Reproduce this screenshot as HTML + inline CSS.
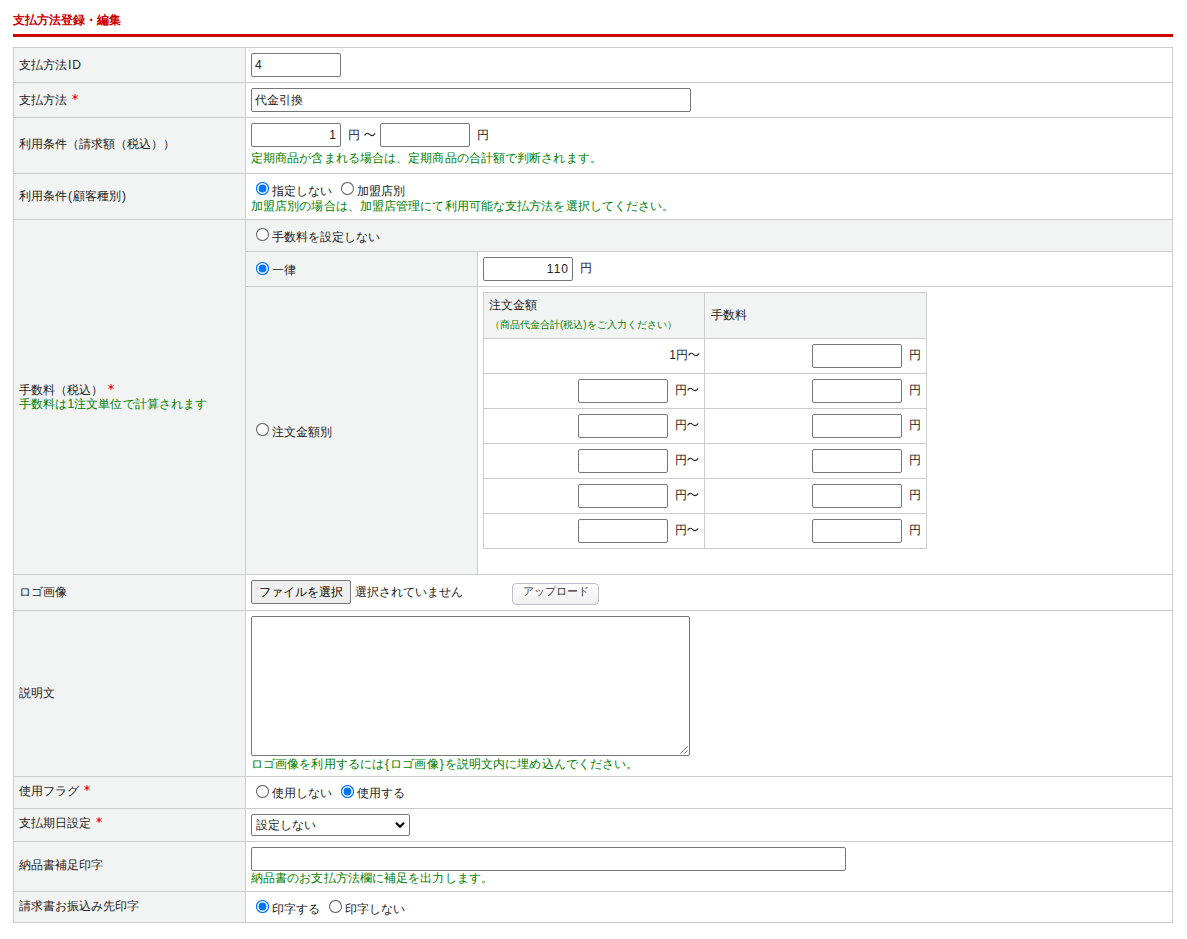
<!DOCTYPE html><html lang="ja"><head><meta charset="utf-8"><style>
html,body{margin:0;padding:0;background:#fff;width:1187px;height:939px;overflow:hidden}
body{font-family:"Liberation Sans",sans-serif;font-size:12px;line-height:16px;color:#222;position:relative}
.a{position:absolute}
.t,.tg,.tt{position:absolute;white-space:nowrap;line-height:16px}
.tg{color:#008000;letter-spacing:0.1px}
.tg.small{letter-spacing:0}
.tt{color:#cc0000;font-weight:bold}
.small{font-size:10px}
.ast{vertical-align:top;margin-top:2px;margin-left:5px}
.til{vertical-align:top}
.inp{position:absolute;border:1px solid #767676;border-radius:2px;background:#fff}
.ru{position:absolute;width:11px;height:11px;border:1px solid #767676;border-radius:50%;background:#fff}
.rc{position:absolute;width:13px;height:13px;border-radius:50%;background:#0075ff}
.rc:after{content:"";position:absolute;left:1.5px;top:1.5px;width:6px;height:6px;border:2px solid #fff;border-radius:50%;background:#0075ff}
.btn{position:absolute;border:1px solid #767676;border-radius:2px;background:#efefef;font-size:12px;color:#000;line-height:22px;text-align:center;white-space:nowrap}
.btn2{position:absolute;border:1px solid #bfbfcc;border-radius:4px;background:linear-gradient(#fefefe,#efefef);font-size:11px;line-height:15px;text-align:center;white-space:nowrap;color:#333}
</style></head><body><div class="a" style="left:13px;top:47px;width:232px;height:875px;background:#f2f3f3"></div>
<div class="a" style="left:245px;top:219px;width:928px;height:32px;background:#f2f3f3"></div>
<div class="a" style="left:245px;top:251px;width:232px;height:323px;background:#f2f3f3"></div>
<div class="a" style="left:483px;top:292px;width:444px;height:46px;background:#f2f3f3"></div>
<div class="a" style="left:13px;top:47px;width:1160px;height:1px;background:#cccccc"></div>
<div class="a" style="left:13px;top:82px;width:1160px;height:1px;background:#cccccc"></div>
<div class="a" style="left:13px;top:117px;width:1160px;height:1px;background:#cccccc"></div>
<div class="a" style="left:13px;top:173px;width:1160px;height:1px;background:#cccccc"></div>
<div class="a" style="left:13px;top:219px;width:1160px;height:1px;background:#cccccc"></div>
<div class="a" style="left:13px;top:574px;width:1160px;height:1px;background:#cccccc"></div>
<div class="a" style="left:13px;top:610px;width:1160px;height:1px;background:#cccccc"></div>
<div class="a" style="left:13px;top:776px;width:1160px;height:1px;background:#cccccc"></div>
<div class="a" style="left:13px;top:808px;width:1160px;height:1px;background:#cccccc"></div>
<div class="a" style="left:13px;top:841px;width:1160px;height:1px;background:#cccccc"></div>
<div class="a" style="left:13px;top:891px;width:1160px;height:1px;background:#cccccc"></div>
<div class="a" style="left:13px;top:922px;width:1160px;height:1px;background:#cccccc"></div>
<div class="a" style="left:13px;top:47px;width:1px;height:876px;background:#cccccc"></div>
<div class="a" style="left:245px;top:47px;width:1px;height:876px;background:#cccccc"></div>
<div class="a" style="left:1172px;top:47px;width:1px;height:876px;background:#cccccc"></div>
<div class="a" style="left:245px;top:251px;width:928px;height:1px;background:#cccccc"></div>
<div class="a" style="left:245px;top:286px;width:928px;height:1px;background:#cccccc"></div>
<div class="a" style="left:477px;top:251px;width:1px;height:323px;background:#cccccc"></div>
<div class="a" style="left:483px;top:292px;width:444px;height:1px;background:#cccccc"></div>
<div class="a" style="left:483px;top:338px;width:444px;height:1px;background:#cccccc"></div>
<div class="a" style="left:483px;top:373px;width:444px;height:1px;background:#cccccc"></div>
<div class="a" style="left:483px;top:408px;width:444px;height:1px;background:#cccccc"></div>
<div class="a" style="left:483px;top:443px;width:444px;height:1px;background:#cccccc"></div>
<div class="a" style="left:483px;top:478px;width:444px;height:1px;background:#cccccc"></div>
<div class="a" style="left:483px;top:513px;width:444px;height:1px;background:#cccccc"></div>
<div class="a" style="left:483px;top:548px;width:444px;height:1px;background:#cccccc"></div>
<div class="a" style="left:483px;top:292px;width:1px;height:257px;background:#cccccc"></div>
<div class="a" style="left:704px;top:292px;width:1px;height:257px;background:#cccccc"></div>
<div class="a" style="left:926px;top:292px;width:1px;height:257px;background:#cccccc"></div>
<div class="tt" style="left:13px;top:12px;">支払方法登録・編集</div>
<div class="a" style="left:13px;top:34px;width:1160px;height:3px;background:#cc0000"></div>
<div class="t" style="left:19px;top:57px;">支払方法<span style="letter-spacing:1px;margin-left:1px">ID</span></div>
<div class="t" style="left:19px;top:92px;">支払方法<svg class="ast" width="6" height="6" viewBox="0 0 6 6"><g stroke="#ff0000" stroke-width="0.9"><line x1="3" y1="0" x2="3" y2="6"/><line x1="0.4" y1="1.5" x2="5.6" y2="4.5"/><line x1="0.4" y1="4.5" x2="5.6" y2="1.5"/></g><circle cx="3" cy="3" r="1.2" fill="#ff0000"/></svg></div>
<div class="t" style="left:19px;top:136px;">利用条件（請求額（税込））</div>
<div class="t" style="left:19px;top:188px;">利用条件<span style="margin:0 1px">(</span>顧客種別<span style="margin-left:1px">)</span></div>
<div class="t" style="left:19px;top:382px;">手数料（税込）<svg class="ast" width="6" height="6" viewBox="0 0 6 6"><g stroke="#ff0000" stroke-width="0.9"><line x1="3" y1="0" x2="3" y2="6"/><line x1="0.4" y1="1.5" x2="5.6" y2="4.5"/><line x1="0.4" y1="4.5" x2="5.6" y2="1.5"/></g><circle cx="3" cy="3" r="1.2" fill="#ff0000"/></svg></div>
<div class="tg" style="left:19px;top:396px;">手数料は1注文単位で計算されます</div>
<div class="t" style="left:19px;top:584px;">ロゴ画像</div>
<div class="t" style="left:19px;top:685px;">説明文</div>
<div class="t" style="left:19px;top:783px;">使用フラグ<svg class="ast" width="6" height="6" viewBox="0 0 6 6"><g stroke="#ff0000" stroke-width="0.9"><line x1="3" y1="0" x2="3" y2="6"/><line x1="0.4" y1="1.5" x2="5.6" y2="4.5"/><line x1="0.4" y1="4.5" x2="5.6" y2="1.5"/></g><circle cx="3" cy="3" r="1.2" fill="#ff0000"/></svg></div>
<div class="t" style="left:19px;top:815px;">支払期日設定<svg class="ast" width="6" height="6" viewBox="0 0 6 6"><g stroke="#ff0000" stroke-width="0.9"><line x1="3" y1="0" x2="3" y2="6"/><line x1="0.4" y1="1.5" x2="5.6" y2="4.5"/><line x1="0.4" y1="4.5" x2="5.6" y2="1.5"/></g><circle cx="3" cy="3" r="1.2" fill="#ff0000"/></svg></div>
<div class="t" style="left:19px;top:857px;">納品書補足印字</div>
<div class="t" style="left:19px;top:898px;">請求書お振込み先印字</div>
<div class="inp" style="left:251px;top:53px;width:88px;height:22px;"></div>
<div class="t" style="left:255px;top:57px;">4</div>
<div class="inp" style="left:251px;top:88px;width:438px;height:22px;"></div>
<div class="t" style="left:255px;top:92px;">代金引換</div>
<div class="inp" style="left:251px;top:123px;width:88px;height:22px;"></div>
<div class="t" style="left:251px;top:127px;width:85px;text-align:right">1</div>
<div class="t" style="left:348px;top:127px;">円 <svg class="til" style="margin-left:1px" width="12" height="16" viewBox="0 0 12 16"><path d="M0.6,8.6 C2,6 3.6,5.6 5.5,7.4 C7.4,9.2 9.2,9.2 11.2,6.4" fill="none" stroke="#222" stroke-width="1.1"/></svg></div>
<div class="inp" style="left:380px;top:123px;width:88px;height:22px;"></div>
<div class="t" style="left:477px;top:127px;">円</div>
<div class="tg" style="left:251px;top:150px;">定期商品が含まれる場合は、定期商品の合計額で判断されます。</div>
<svg class="a" style="left:256px;top:182px" width="13" height="13"><circle cx="6.5" cy="6.5" r="6" fill="#fff" stroke="#0075ff" stroke-width="1.2"/><circle cx="6.5" cy="6.5" r="3.9" fill="#0075ff"/></svg>
<div class="t" style="left:272px;top:183px;">指定しない</div>
<svg class="a" style="left:341px;top:182px" width="13" height="13"><circle cx="6.5" cy="6.5" r="6" fill="#fff" stroke="#6e6e6e" stroke-width="1.1"/></svg>
<div class="t" style="left:357px;top:183px;">加盟店別</div>
<div class="tg" style="left:251px;top:198px;">加盟店別の場合は、加盟店管理にて利用可能な支払方法を選択してください。</div>
<svg class="a" style="left:256px;top:228px" width="13" height="13"><circle cx="6.5" cy="6.5" r="6" fill="#fff" stroke="#6e6e6e" stroke-width="1.1"/></svg>
<div class="t" style="left:272px;top:229px;">手数料を設定しない</div>
<svg class="a" style="left:256px;top:262px" width="13" height="13"><circle cx="6.5" cy="6.5" r="6" fill="#fff" stroke="#0075ff" stroke-width="1.2"/><circle cx="6.5" cy="6.5" r="3.9" fill="#0075ff"/></svg>
<div class="t" style="left:272px;top:262px;">一律</div>
<div class="inp" style="left:483px;top:257px;width:88px;height:22px;"></div>
<div class="t" style="left:483px;top:261px;width:86px;text-align:right;letter-spacing:1px">110</div>
<div class="t" style="left:580px;top:260px;">円</div>
<svg class="a" style="left:256px;top:423px" width="13" height="13"><circle cx="6.5" cy="6.5" r="6" fill="#fff" stroke="#6e6e6e" stroke-width="1.1"/></svg>
<div class="t" style="left:272px;top:424px;">注文金額別</div>
<div class="t" style="left:489px;top:297px;">注文金額</div>
<div class="tg small" style="left:490px;top:317px;">（商品代金合計(税込)をご入力ください）</div>
<div class="t" style="left:711px;top:307px;">手数料</div>
<div class="t" style="left:483px;top:347px;width:217px;text-align:right">1円<svg class="til" width="12" height="16" viewBox="0 0 12 16"><path d="M0.6,8.6 C2,6 3.6,5.6 5.5,7.4 C7.4,9.2 9.2,9.2 11.2,6.4" fill="none" stroke="#222" stroke-width="1.1"/></svg></div>
<div class="inp" style="left:812px;top:344px;width:88px;height:22px;"></div>
<div class="t" style="left:909px;top:347px;">円</div>
<div class="inp" style="left:578px;top:379px;width:88px;height:22px;"></div>
<div class="t" style="left:675px;top:382px;">円<svg class="til" width="12" height="16" viewBox="0 0 12 16"><path d="M0.6,8.6 C2,6 3.6,5.6 5.5,7.4 C7.4,9.2 9.2,9.2 11.2,6.4" fill="none" stroke="#222" stroke-width="1.1"/></svg></div>
<div class="inp" style="left:812px;top:379px;width:88px;height:22px;"></div>
<div class="t" style="left:909px;top:382px;">円</div>
<div class="inp" style="left:578px;top:414px;width:88px;height:22px;"></div>
<div class="t" style="left:675px;top:417px;">円<svg class="til" width="12" height="16" viewBox="0 0 12 16"><path d="M0.6,8.6 C2,6 3.6,5.6 5.5,7.4 C7.4,9.2 9.2,9.2 11.2,6.4" fill="none" stroke="#222" stroke-width="1.1"/></svg></div>
<div class="inp" style="left:812px;top:414px;width:88px;height:22px;"></div>
<div class="t" style="left:909px;top:417px;">円</div>
<div class="inp" style="left:578px;top:449px;width:88px;height:22px;"></div>
<div class="t" style="left:675px;top:452px;">円<svg class="til" width="12" height="16" viewBox="0 0 12 16"><path d="M0.6,8.6 C2,6 3.6,5.6 5.5,7.4 C7.4,9.2 9.2,9.2 11.2,6.4" fill="none" stroke="#222" stroke-width="1.1"/></svg></div>
<div class="inp" style="left:812px;top:449px;width:88px;height:22px;"></div>
<div class="t" style="left:909px;top:452px;">円</div>
<div class="inp" style="left:578px;top:484px;width:88px;height:22px;"></div>
<div class="t" style="left:675px;top:487px;">円<svg class="til" width="12" height="16" viewBox="0 0 12 16"><path d="M0.6,8.6 C2,6 3.6,5.6 5.5,7.4 C7.4,9.2 9.2,9.2 11.2,6.4" fill="none" stroke="#222" stroke-width="1.1"/></svg></div>
<div class="inp" style="left:812px;top:484px;width:88px;height:22px;"></div>
<div class="t" style="left:909px;top:487px;">円</div>
<div class="inp" style="left:578px;top:519px;width:88px;height:22px;"></div>
<div class="t" style="left:675px;top:522px;">円<svg class="til" width="12" height="16" viewBox="0 0 12 16"><path d="M0.6,8.6 C2,6 3.6,5.6 5.5,7.4 C7.4,9.2 9.2,9.2 11.2,6.4" fill="none" stroke="#222" stroke-width="1.1"/></svg></div>
<div class="inp" style="left:812px;top:519px;width:88px;height:22px;"></div>
<div class="t" style="left:909px;top:522px;">円</div>
<div class="btn" style="left:251px;top:580px;width:98px;height:22px">ファイルを選択</div>
<div class="t" style="left:355px;top:584px;">選択されていません</div>
<div class="btn2" style="left:512px;top:583px;width:85px;height:20px">アップロード</div>
<div class="inp" style="left:251px;top:616px;width:437px;height:138px;"></div>
<svg class="a" style="left:679px;top:745px" width="10" height="10"><g stroke="#707070" stroke-width="1"><line x1="1.4" y1="8.6" x2="8.6" y2="1.4"/><line x1="5.4" y1="8.6" x2="8.6" y2="5.4"/></g></svg>
<div class="tg" style="left:251px;top:756px;">ロゴ画像を利用するには<span style="margin:0 1px 0 1px">{</span>ロゴ画像<span style="margin:0 1px 0 1px">}</span>を説明文内に埋め込んでください。</div>
<svg class="a" style="left:256px;top:785px" width="13" height="13"><circle cx="6.5" cy="6.5" r="6" fill="#fff" stroke="#6e6e6e" stroke-width="1.1"/></svg>
<div class="t" style="left:272px;top:785px;">使用しない</div>
<svg class="a" style="left:341px;top:785px" width="13" height="13"><circle cx="6.5" cy="6.5" r="6" fill="#fff" stroke="#0075ff" stroke-width="1.2"/><circle cx="6.5" cy="6.5" r="3.9" fill="#0075ff"/></svg>
<div class="t" style="left:357px;top:785px;">使用する</div>
<div class="inp" style="left:251px;top:814px;width:157px;height:20px;"></div>
<div class="t" style="left:256px;top:817px;">設定しない</div>
<svg class="a" style="left:394px;top:819px" width="12" height="12"><path d="M2,3.8 L6,7.8 L10,3.8" fill="none" stroke="#000" stroke-width="2"/></svg>
<div class="inp" style="left:251px;top:847px;width:593px;height:22px;"></div>
<div class="tg" style="left:251px;top:870px;">納品書のお支払方法欄に補足を出力します。</div>
<svg class="a" style="left:256px;top:900px" width="13" height="13"><circle cx="6.5" cy="6.5" r="6" fill="#fff" stroke="#0075ff" stroke-width="1.2"/><circle cx="6.5" cy="6.5" r="3.9" fill="#0075ff"/></svg>
<div class="t" style="left:272px;top:901px;">印字する</div>
<svg class="a" style="left:329px;top:900px" width="13" height="13"><circle cx="6.5" cy="6.5" r="6" fill="#fff" stroke="#6e6e6e" stroke-width="1.1"/></svg>
<div class="t" style="left:345px;top:901px;">印字しない</div></body></html>
